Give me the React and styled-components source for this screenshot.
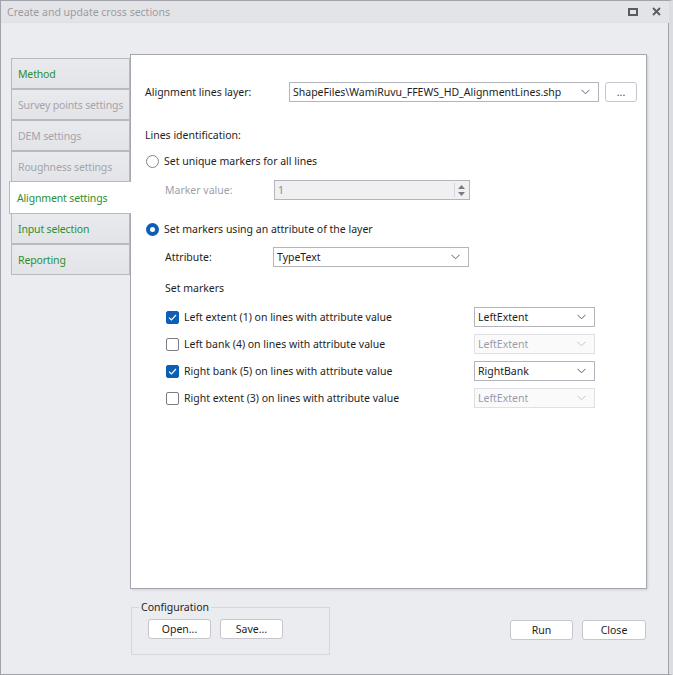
import styled, { createGlobalStyle } from 'styled-components';

const GlobalStyle = createGlobalStyle`
  body {
    margin: 0;
    font-family: "Noto Sans", "DejaVu Sans", sans-serif;
    font-size: 10.5px;
    color: #1e1e1e;
  }
`;

const tabs = [
  { label: 'Method', state: 'enabled' },
  { label: 'Survey points settings', state: 'disabled' },
  { label: 'DEM settings', state: 'disabled' },
  { label: 'Roughness settings', state: 'disabled' },
  { label: 'Alignment settings', state: 'selected' },
  { label: 'Input selection', state: 'enabled' },
  { label: 'Reporting', state: 'enabled' },
];

const markers = [
  { label: 'Left extent (1) on lines with attribute value', checked: true, value: 'LeftExtent' },
  { label: 'Left bank (4) on lines with attribute value', checked: false, value: 'LeftExtent' },
  { label: 'Right bank (5) on lines with attribute value', checked: true, value: 'RightBank' },
  { label: 'Right extent (3) on lines with attribute value', checked: false, value: 'LeftExtent' },
];

const Chevron = ({ muted }) => (
  <svg width="9" height="6" viewBox="0 0 9 6">
    <polyline points="0.5,0.8 4.5,4.8 8.5,0.8" fill="none" stroke={muted ? '#c4c4c8' : '#606066'} strokeWidth="1" />
  </svg>
);

const Combo = ({ value, width, disabled }) => (
  <ComboBox width={width} disabled={disabled}>
    <span>{value}</span>
    <Chevron muted={disabled} />
  </ComboBox>
);

const App = () => {
  return (
    <>
      <GlobalStyle />
      <Window>
        <TitleBar>
          <Title>Create and update cross sections</Title>
          <TitleButtons>
            <RestoreIcon />
            <svg width="9" height="9" viewBox="0 0 9 9">
              <path d="M1 1 L8 8 M8 1 L1 8" stroke="#5a5a62" strokeWidth="1.8" />
            </svg>
          </TitleButtons>
        </TitleBar>

        <Body>
          <Main>
            <TabList>
              {tabs.map(t => (
                <Tab key={t.label} state={t.state}>{t.label}</Tab>
              ))}
            </TabList>

            <Panel>
              <LayerRow>
                <FieldLabel width={144}>Alignment lines layer:</FieldLabel>
                <Combo value="ShapeFiles\WamiRuvu_FFEWS_HD_AlignmentLines.shp" width={310} />
                <BrowseButton>...</BrowseButton>
              </LayerRow>

              <TextLine top={23}>Lines identification:</TextLine>

              <OptionRow top={6}>
                <Radio />
                Set unique markers for all lines
              </OptionRow>

              <SubRow top={9}>
                <FieldLabel width={109} muted>Marker value:</FieldLabel>
                <SpinBox>
                  <span>1</span>
                  <SpinButtons>
                    <svg width="7" height="4" viewBox="0 0 7 4"><path d="M0 4 L3.5 0 L7 4 Z" fill="#7a7a80" /></svg>
                    <svg width="7" height="4" viewBox="0 0 7 4"><path d="M0 0 L3.5 4 L7 0 Z" fill="#7a7a80" /></svg>
                  </SpinButtons>
                </SpinBox>
              </SubRow>

              <OptionRow top={19}>
                <Radio checked />
                Set markers using an attribute of the layer
              </OptionRow>

              <SubRow top={8}>
                <FieldLabel width={108}>Attribute:</FieldLabel>
                <Combo value="TypeText" width={196} />
              </SubRow>

              <SubRow top={11}>Set markers</SubRow>

              <MarkerList>
                {markers.map(m => (
                  <MarkerRow key={m.label}>
                    <CheckLabel>
                      <CheckBox checked={m.checked}>
                        {m.checked && (
                          <svg width="9" height="7" viewBox="0 0 9 7">
                            <polyline points="1,3.6 3.4,6 8,1" fill="none" stroke="#fff" strokeWidth="1.2" />
                          </svg>
                        )}
                      </CheckBox>
                      {m.label}
                    </CheckLabel>
                    <Combo value={m.value} width={121} disabled={!m.checked} />
                  </MarkerRow>
                ))}
              </MarkerList>
            </Panel>
          </Main>

          <Footer>
            <GroupBox>
              <GroupTitle>Configuration</GroupTitle>
              <ButtonRow>
                <Button>Open...</Button>
                <Button>Save...</Button>
              </ButtonRow>
            </GroupBox>
            <ButtonRow>
              <Button>Run</Button>
              <Button width={64}>Close</Button>
            </ButtonRow>
          </Footer>
        </Body>
      </Window>
    </>
  );
};

// Styled Components
const Window = styled.div`
  width: 673px;
  height: 675px;
  box-sizing: border-box;
  border: 1px solid #a2a2aa;
  border-right-width: 4px;
  border-right-color: #dcdde2;
  box-shadow: inset -1px 0 0 #a2a2aa;
  background: #ebecf0;
  display: flex;
  flex-direction: column;
`;

const TitleBar = styled.div`
  height: 21px;
  background: #e3e4e8;
  border-bottom: 1px solid #dedfe3;
  display: flex;
  align-items: center;
  justify-content: space-between;
  padding: 0 8px 0 6px;
`;

const Title = styled.span`
  color: #9b9ba2;
  font-size: 10.5px;
`;

const TitleButtons = styled.div`
  display: flex;
  align-items: center;
  gap: 14px;
`;

const RestoreIcon = styled.span`
  width: 6px;
  height: 4px;
  border: 2px solid #5a5a62;
`;

const Body = styled.div`
  flex: 1;
  display: flex;
  flex-direction: column;
  padding: 31px 22px 0 8px;
`;

const Main = styled.div`
  display: flex;
  height: 535px;
`;

const TabList = styled.div`
  width: 122px;
  padding-top: 4px;
  display: flex;
  flex-direction: column;
  position: relative;
  z-index: 1;
  margin-right: -1px;
`;

const Tab = styled.div`
  box-sizing: border-box;
  height: ${p => (p.state === 'selected' ? 33 : 31)}px;
  margin: ${p => (p.state === 'selected' ? '-1px 0 -1px 0' : '0 1px 0 2px')};
  padding-left: ${p => (p.state === 'selected' ? 7 : 6)}px;
  display: flex;
  align-items: center;
  border: 1px solid #b9b9c1;
  border-right: ${p => (p.state === 'selected' ? 'none' : '1px solid #b9b9c1')};
  background: ${p => (p.state === 'selected' ? '#ffffff' : 'linear-gradient(#e9eaee, #e3e4e8)')};
  color: ${p => (p.state === 'disabled' ? '#a4a4aa' : '#2d8f2d')};
  letter-spacing: -0.15px;
  white-space: nowrap;
  overflow: hidden;
`;

const Panel = styled.div`
  flex: 1;
  box-sizing: border-box;
  background: #ffffff;
  border: 1px solid #a6a6ae;
  box-shadow: 1px 1px 2px rgba(0, 0, 0, 0.12);
  padding: 27px 0 0 14px;
  display: flex;
  flex-direction: column;
`;

const LayerRow = styled.div`
  display: flex;
  align-items: center;
  height: 20px;
`;

const FieldLabel = styled.span`
  width: ${p => p.width}px;
  flex-shrink: 0;
  color: ${p => (p.muted ? '#a0a0a8' : 'inherit')};
`;

const ComboBox = styled.div`
  width: ${p => p.width}px;
  height: 20px;
  box-sizing: border-box;
  border: 1px solid ${p => (p.disabled ? '#e0e0e4' : '#b4b4bc')};
  background: ${p => (p.disabled ? '#fafafa' : '#ffffff')};
  color: ${p => (p.disabled ? '#9a9aac' : '#1e1e1e')};
  display: flex;
  align-items: center;
  justify-content: space-between;
  padding: 0 8px 0 3px;
  white-space: nowrap;
`;

const BrowseButton = styled.div`
  width: 32px;
  height: 20px;
  box-sizing: border-box;
  margin-left: 6px;
  border: 1px solid #c6c6cc;
  border-radius: 3px;
  display: flex;
  align-items: center;
  justify-content: center;
  color: #4a3a9a;
`;

const TextLine = styled.div`
  height: 20px;
  display: flex;
  align-items: center;
  margin-top: ${p => p.top}px;
`;

const OptionRow = styled.div`
  height: 20px;
  display: flex;
  align-items: center;
  gap: 5px;
  margin-top: ${p => p.top}px;
  margin-left: 1px;
`;

const Radio = styled.span`
  width: 13px;
  height: 13px;
  box-sizing: border-box;
  border-radius: 50%;
  border: ${p => (p.checked ? '4px solid #0c5fb4' : '1px solid #86868c')};
  background: #ffffff;
`;

const SubRow = styled.div`
  height: 20px;
  display: flex;
  align-items: center;
  padding-left: 20px;
  margin-top: ${p => p.top}px;
`;

const SpinBox = styled.div`
  width: 196px;
  height: 20px;
  box-sizing: border-box;
  border: 1px solid #b4b4bc;
  background: #f0f0f2;
  display: flex;
  align-items: center;
  justify-content: space-between;
  padding: 0 2px 0 3px;
  color: #8a8a92;
`;

const SpinButtons = styled.div`
  height: 14px;
  width: 12px;
  display: flex;
  flex-direction: column;
  align-items: center;
  justify-content: space-around;
  border-left: 1px solid #d4d4da;
`;

const MarkerList = styled.div`
  display: flex;
  flex-direction: column;
  gap: 7px;
  margin-top: 9px;
  padding-left: 21px;
`;

const MarkerRow = styled.div`
  display: flex;
  align-items: center;
  height: 20px;
`;

const CheckLabel = styled.div`
  width: 308px;
  display: flex;
  align-items: center;
  gap: 5px;
`;

const CheckBox = styled.span`
  width: 13px;
  height: 13px;
  box-sizing: border-box;
  border-radius: 2px;
  border: 1px solid ${p => (p.checked ? '#0c5fb4' : '#7c7c82')};
  background: ${p => (p.checked ? '#0c5fb4' : '#ffffff')};
  display: flex;
  align-items: center;
  justify-content: center;
`;

const Footer = styled.div`
  display: flex;
  justify-content: space-between;
  align-items: flex-start;
  margin-top: 18px;
  padding: 0 1px 0 122px;
`;

const GroupBox = styled.div`
  width: 199px;
  height: 48px;
  box-sizing: border-box;
  border: 1px solid #d6d6dc;
  padding: 0 0 0 16px;
`;

const GroupTitle = styled.div`
  display: inline-block;
  margin: -8px 0 0 -9px;
  padding: 0 2px;
  background: #ebecf0;
  line-height: 15px;
  vertical-align: top;
`;

const ButtonRow = styled.div`
  display: flex;
  gap: 9px;
  margin-top: 13px;

  ${GroupBox} & {
    margin-top: -3px;
  }
`;

const Button = styled.div`
  width: ${p => p.width || 63}px;
  height: 20px;
  box-sizing: border-box;
  background: #ffffff;
  border: 1px solid #c6c6cc;
  border-radius: 3px;
  display: flex;
  align-items: center;
  justify-content: center;
`;

export default App;
